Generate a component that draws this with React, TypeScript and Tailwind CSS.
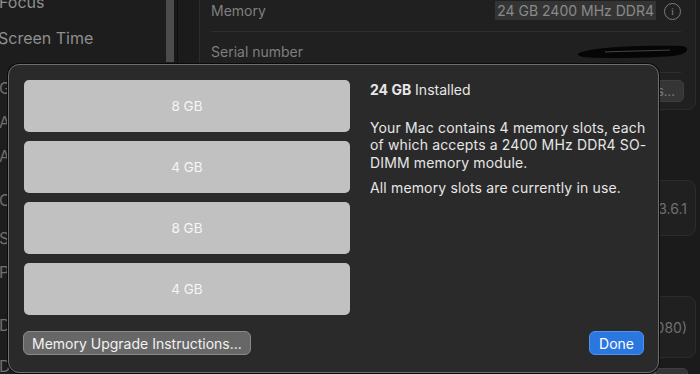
const slots = ['8 GB', '4 GB', '8 GB', '4 GB'];

const sidebarLetters = [
  { label: 'General', top: 'mt-[30px]' },
  { label: 'Appearance', top: 'mt-[14px]' },
  { label: 'Accessibility', top: 'mt-[14px]' },
  { label: 'Control Centre', top: 'mt-[24px]' },
  { label: 'Siri & Spotlight', top: 'mt-[18px]' },
  { label: 'Privacy & Security', top: 'mt-[14px]' },
  { label: 'Desktop & Dock', top: 'mt-[33px]' },
  { label: 'Displays', top: 'mt-[21px]' },
];

function InfoBadge() {
  return (
    <div
      className="ml-[8px] flex h-[17px] w-[17px] shrink-0 items-center justify-center rounded-full border border-[#7c7c7c] text-[11px] leading-none text-[#7c7c7c]"
      style={{ fontFamily: '"Liberation Serif", serif' }}
    >
      i
    </div>
  );
}

function Scribble() {
  return (
    <svg width="116" height="20" viewBox="0 0 116 20" className="max-w-none">
      <path
        d="M4 12 C20 6, 60 4, 108 5 C115 7, 114 13, 98 15 C70 17, 30 18, 8 16 C2 15, 2 13, 4 12 Z"
        fill="#050505"
      />
      <path d="M30 11 C50 10, 70 10, 95 9" stroke="#555" strokeWidth="0.8" fill="none" />
    </svg>
  );
}

function Background() {
  return (
    <div className="flex h-full w-full">
      {/* sidebar */}
      <div className="w-[166px] shrink-0 bg-[#1d1d1d] text-[#8f8f8f] text-[16px] leading-5">
        <div className="-mt-[8px] -ml-[1px]">Focus</div>
        <div className="mt-[16px] -ml-[2px]">Screen Time</div>
        {sidebarLetters.map((s) => (
          <div key={s.label} className={`${s.top} -ml-[1px] text-[#6f6f6f]`}>
            {s.label}
          </div>
        ))}
      </div>
      {/* scroller */}
      <div className="w-[8px] shrink-0 bg-[#1d1d1d]">
        <div className="h-[62px] w-[8px] bg-[#4c4c4c]" />
      </div>
      <div className="w-[4px] shrink-0 bg-[#181818] border-r border-[#101010]" />
      {/* content */}
      <div className="min-w-0 flex-1 bg-[#1b1b1b] pl-[21px] pr-[4px]">
        <div className="mt-[-14px] rounded-[8px] border border-[#2c2c2c] bg-[#202020] pl-[11px] pr-[14px] text-[14px] text-[#7f7f7f]">
          <div className="flex h-[44px] items-end pb-[11px]">
            <span className="leading-[19px]">Memory</span>
            <span className="ml-auto h-[19px] whitespace-nowrap bg-[#343434] px-[2px] leading-[19px] text-[#8a8a8a]">
              24 GB 2400 MHz DDR4
            </span>
            <InfoBadge />
          </div>
          <div className="h-px bg-[#2e2e2e]" />
          <div className="flex items-center h-[40px]">
            <span className="-mt-[2px]">Serial number</span>
            <span className="ml-auto -mr-[10px] -mt-[2px]">
              <Scribble />
            </span>
          </div>
          <div className="h-px bg-[#2e2e2e]" />
          <div className="flex h-[36px] items-center justify-end -mr-[3px]">
            <span className="rounded-[5px] bg-[#353535] border border-[#3e3e3e] px-2 text-[13px] leading-[20px] text-[#7a7a7a]">
              Contracts...
            </span>
          </div>
        </div>
        <div className="mt-[70px] rounded-[8px] border border-[#2c2c2c] bg-[#202020] h-[56px] flex items-center justify-end pr-[8px] text-[14px] text-[#6f6f6f]">
          macOS Ventura 13.6.1
        </div>
        <div className="mt-[60px] rounded-[8px] border border-[#2c2c2c] bg-[#202020] h-[62px] flex items-center justify-end pr-[8px] text-[14px] text-[#6f6f6f]">
          (1920 × 1080)
        </div>
        <div className="mt-[10px] flex justify-end pr-[8px]">
          <span className="rounded-[5px] bg-[#353535] border border-[#3e3e3e] px-2 text-[13px] text-[#6a6a6a]">
            Display Settings
          </span>
        </div>
      </div>
    </div>
  );
}

export default function App() {
  return (
    <div
      className="relative h-[374px] w-[700px] overflow-hidden bg-[#1b1b1b]"
      style={{ fontFamily: 'Inter, "Noto Sans", sans-serif' }}
    >
      <Background />

      {/* memory sheet */}
      <div className="absolute left-[8px] top-[64px] h-[309px] w-[651px] rounded-[11px] border border-[#6e6e6e] bg-[#2a2a2a] shadow-[0_0_0_1px_#0a0a0a] flex flex-col px-[15px] pt-[15px] pb-[17px]">
        <div className="flex gap-[20px]">
          <div className="w-[326px] shrink-0 flex flex-col gap-[9px]">
            {slots.map((s, i) => (
              <div
                key={i}
                className="h-[52px] rounded-[5px] bg-[#c1c1c1] flex items-center justify-center text-[13.5px] text-[#f6f6f6]"
              >
                {s}
              </div>
            ))}
          </div>
          <div className="flex-1 pt-[1px] text-[14px] leading-[17.5px] text-[#e6e6e6] whitespace-nowrap">
            <p>
              <span className="font-bold">24 GB</span> Installed
            </p>
            <p className="mt-[20px] tracking-[0.15px]">
              Your Mac contains 4 memory slots, each
              <br />
              of which accepts a 2400 MHz DDR4 SO-
              <br />
              DIMM memory module.
            </p>
            <p className="mt-[8px] tracking-[0.15px]">All memory slots are currently in use.</p>
          </div>
        </div>
        <div className="mt-auto flex items-center justify-between">
          <button className="h-[24px] rounded-[6px] border border-[#8a8a8a] bg-[#676767] px-[8px] text-[14px] text-[#f2f2f2] -ml-[1px]">
            Memory Upgrade Instructions...
          </button>
          <button className="h-[24px] w-[55px] rounded-[6px] border border-[#4b95f0] bg-[#2a77e0] text-[14px] text-white -mr-[1px]">
            Done
          </button>
        </div>
      </div>
    </div>
  );
}
